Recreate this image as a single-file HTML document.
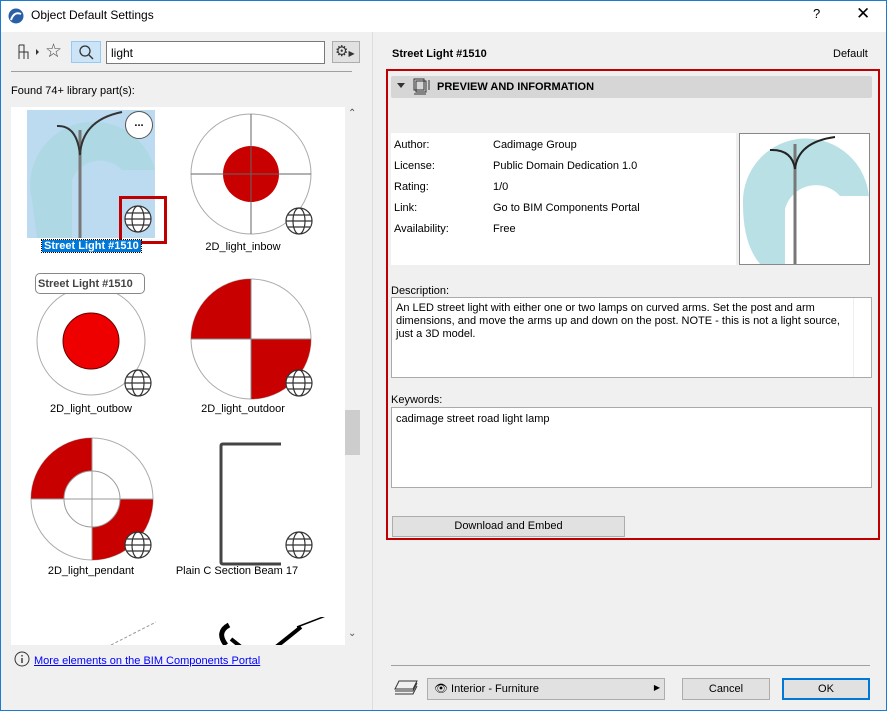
<!DOCTYPE html>
<html><head><style>
*{box-sizing:border-box;margin:0;padding:0}
body{width:887px;height:711px;overflow:hidden;background:#f0f0f0;font-family:"Liberation Sans",sans-serif;font-size:11px;color:#000;position:relative}
.a{position:absolute}
.win{position:absolute;left:0;top:0;width:887px;height:711px;border:1px solid #1a7bd0}
.t{white-space:nowrap}
.btn{position:absolute;background:#e1e1e1;border:1px solid #adadad;text-align:center;font-size:11px}
.lbl{position:absolute;width:150px;text-align:center;font-size:11px}
.globe{position:absolute;width:28px;height:28px}
</style></head><body>
<div class="win"></div>
<div class="a" style="left:1px;top:1px;width:885px;height:31px;background:#fff"></div>
<svg class="a" style="left:8px;top:8px" width="16" height="16"><circle cx="8" cy="8" r="7.5" fill="#2a5fa8"/><path d="M3 12 Q6 3 13 6" stroke="#fff" stroke-width="2" fill="none"/></svg>
<div class="a t" style="left:31px;top:8px;font-size:12px">Object Default Settings</div>
<div class="a t" style="left:813px;top:6px;font-size:13px">?</div>
<div class="a t" style="left:856px;top:4px;font-size:17px">✕</div>
<svg class="a" style="left:16px;top:43px" width="24" height="18"><path d="M3 2h5v7h4v7M3 2v14M3 9h5M8 9v7" stroke="#333" fill="none"/><path d="M20 6l3 3-3 3z" fill="#333"/></svg>
<div class="a" style="left:45px;top:40px;font-size:19px;color:#444">☆</div>
<div class="a" style="left:71px;top:41px;width:30px;height:22px;background:#cce4f7;border:1px solid #99c9ef"></div>
<svg class="a" style="left:78px;top:44px" width="16" height="16"><circle cx="7" cy="7" r="5" stroke="#333" stroke-width="1.3" fill="none"/><path d="M11 11l4 4" stroke="#333" stroke-width="1.3"/></svg>
<div class="a" style="left:106px;top:41px;width:219px;height:23px;background:#fff;border:1px solid #7a7a7a"></div>
<div class="a t" style="left:111px;top:46px;font-size:12px">light</div>
<div class="a" style="left:332px;top:41px;width:28px;height:22px;background:#e1e1e1;border:1px solid #adadad;font-size:15px;line-height:20px;padding-left:2px;color:#333">⚙<span style="font-size:8px">▶</span></div>
<div class="a" style="left:11px;top:71px;width:341px;height:1px;background:#a0a0a0"></div>
<div class="a t" style="left:11px;top:85px">Found 74+ library part(s):</div>
<div class="a" style="left:11px;top:107px;width:334px;height:538px;background:#fff;overflow:hidden">
 <div class="a" style="left:16px;top:3px;width:128px;height:128px;background:#bcdaf0"></div>
 <svg class="a" style="left:16px;top:3px" width="128" height="128"><path d="M5 90 A55 55 0 0 1 128 60 L128 60 L95 60 A30 30 0 0 0 45 70 L45 128 L10 128 Z" fill="#a8d8de" opacity=".7"/><path d="M53 20 L53 128" stroke="#777" stroke-width="3"/><path d="M53 45 Q55 10 95 2" stroke="#333" stroke-width="2" fill="none"/><path d="M53 45 Q50 15 30 16" stroke="#333" stroke-width="2" fill="none"/></svg>
 <div class="a" style="left:114px;top:4px;width:28px;height:28px;border-radius:50%;background:#fff;border:1px solid #555;text-align:center;font-weight:bold;line-height:22px">...</div>
 <div class="a" style="left:108px;top:89px;width:48px;height:48px;border:3px solid #c00000"></div>
 <div class="a t" style="left:31px;top:133px;background:#0078d7;color:#fff;font-weight:bold;padding:0 2px;outline:1px dotted #000">Street Light #1510</div>
 <svg class="a" style="left:178px;top:5px" width="124" height="124"><circle cx="62" cy="62" r="60" fill="#fff" stroke="#aaa"/><circle cx="62" cy="62" r="28" fill="#c80000"/><path d="M62 2v120M2 62h120" stroke="#666"/></svg>
 <div class="lbl" style="left:157px;top:134px">2D_light_inbow</div>
 <svg class="a" style="left:24px;top:178px" width="112" height="112"><circle cx="56" cy="56" r="54" fill="#fff" stroke="#aaa"/><circle cx="56" cy="56" r="28" fill="#e00" stroke="#600"/></svg>
 <div class="a t" style="left:24px;top:166px;width:110px;height:21px;border:1px solid #888;border-radius:5px;background:#fff;font-weight:bold;color:#444;padding:4px 2px">Street Light #1510</div>
 <div class="lbl" style="left:5px;top:296px">2D_light_outbow</div>
 <svg class="a" style="left:178px;top:170px" width="124" height="124"><circle cx="62" cy="62" r="60" fill="#fff" stroke="#aaa"/><path d="M62 62V2A60 60 0 0 0 2 62Z" fill="#c80000"/><path d="M62 62V122A60 60 0 0 0 122 62Z" fill="#c80000"/><path d="M62 2v120M2 62h120" stroke="#888"/></svg>
 <div class="lbl" style="left:157px;top:296px">2D_light_outdoor</div>
 <svg class="a" style="left:19px;top:330px" width="124" height="124"><circle cx="62" cy="62" r="61" fill="#fff" stroke="#aaa"/><path d="M62 62V1A61 61 0 0 0 1 62Z" fill="#c80000"/><path d="M62 62V123A61 61 0 0 0 123 62Z" fill="#c80000"/><circle cx="62" cy="62" r="28" fill="#fff" stroke="#999"/><path d="M62 1v122M1 62h122" stroke="#999"/></svg>
 <div class="lbl" style="left:5px;top:458px">2D_light_pendant</div>
 <svg class="a" style="left:208px;top:335px" width="64" height="124"><path d="M62 2H4Q2 2 2 4V120Q2 122 4 122H62" stroke="#444" stroke-width="3" fill="none"/></svg>
 <div class="lbl" style="left:151px;top:458px">Plain C Section Beam 17</div>
 <svg class="a" style="left:40px;top:510px" width="280" height="30"><path d="M60 28L105 5" stroke="#999" stroke-dasharray="3 2"/><path d="M175 28Q165 15 178 8" stroke="#000" stroke-width="5" fill="none"/><path d="M180 22L190 30M225 30L250 10" stroke="#000" stroke-width="4"/><path d="M246 10L285 -5" stroke="#000" stroke-width="1.5"/></svg>
 <svg class="globe" style="left:113px;top:98px" viewBox="0 0 28 28"><g fill="none" stroke="#333" stroke-width="1.2"><circle cx="14" cy="14" r="13" fill="#fff"/><ellipse cx="14" cy="14" rx="6" ry="13"/><path d="M1 14h26M3 8h22M3 20h22"/></g></svg>
 <svg class="globe" style="left:274px;top:100px" viewBox="0 0 28 28"><g fill="none" stroke="#333" stroke-width="1.2"><circle cx="14" cy="14" r="13" fill="#fff"/><ellipse cx="14" cy="14" rx="6" ry="13"/><path d="M1 14h26M3 8h22M3 20h22"/></g></svg>
 <svg class="globe" style="left:113px;top:262px" viewBox="0 0 28 28"><g fill="none" stroke="#333" stroke-width="1.2"><circle cx="14" cy="14" r="13" fill="#fff"/><ellipse cx="14" cy="14" rx="6" ry="13"/><path d="M1 14h26M3 8h22M3 20h22"/></g></svg>
 <svg class="globe" style="left:274px;top:262px" viewBox="0 0 28 28"><g fill="none" stroke="#333" stroke-width="1.2"><circle cx="14" cy="14" r="13" fill="#fff"/><ellipse cx="14" cy="14" rx="6" ry="13"/><path d="M1 14h26M3 8h22M3 20h22"/></g></svg>
 <svg class="globe" style="left:113px;top:424px" viewBox="0 0 28 28"><g fill="none" stroke="#333" stroke-width="1.2"><circle cx="14" cy="14" r="13" fill="#fff"/><ellipse cx="14" cy="14" rx="6" ry="13"/><path d="M1 14h26M3 8h22M3 20h22"/></g></svg>
 <svg class="globe" style="left:274px;top:424px" viewBox="0 0 28 28"><g fill="none" stroke="#333" stroke-width="1.2"><circle cx="14" cy="14" r="13" fill="#fff"/><ellipse cx="14" cy="14" rx="6" ry="13"/><path d="M1 14h26M3 8h22M3 20h22"/></g></svg>
</div>
<div class="a" style="left:345px;top:410px;width:15px;height:45px;background:#cdcdcd"></div>
<div class="a" style="left:348px;top:108px;font-size:10px;color:#555">⌃</div>
<div class="a" style="left:348px;top:628px;font-size:10px;color:#555">⌄</div>
<svg class="a" style="left:14px;top:651px" width="16" height="16"><circle cx="8" cy="8" r="7" fill="none" stroke="#333"/><path d="M8 7v5M8 4v1.5" stroke="#333" stroke-width="1.4"/></svg>
<div class="a t" style="left:34px;top:655px;color:#00f;text-decoration:underline">More elements on the BIM Components Portal</div>
<div class="a" style="left:372px;top:32px;width:1px;height:678px;background:#ddd"></div>
<div class="a t" style="left:392px;top:48px;font-weight:bold">Street Light #1510</div>
<div class="a t" style="left:833px;top:48px">Default</div>
<div class="a" style="left:386px;top:69px;width:494px;height:471px;border:2px solid #c00000"></div>
<div class="a" style="left:391px;top:76px;width:481px;height:22px;background:#d6d6d6;border-radius:2px"></div>
<div class="a" style="left:397px;top:83px;width:0;height:0;border-left:4px solid transparent;border-right:4px solid transparent;border-top:5px solid #333"></div>
<svg class="a" style="left:412px;top:78px" width="20" height="18"><rect x="2" y="1" width="10" height="11" fill="none" stroke="#333"/><rect x="4" y="3" width="10" height="11" fill="none" stroke="#333"/><path d="M2 16h12M17 2v10" stroke="#333"/></svg>
<div class="a t" style="left:437px;top:81px;font-weight:bold">PREVIEW AND INFORMATION</div>
<div class="a" style="left:391px;top:133px;width:345px;height:132px;background:#fff"></div>
<div class="a t" style="left:394px;top:135px;line-height:21px">Author:<br>License:<br>Rating:<br>Link:<br>Availability:</div>
<div class="a t" style="left:493px;top:135px;line-height:21px">Cadimage Group<br>Public Domain Dedication 1.0<br>1/0<br>Go to BIM Components Portal<br>Free</div>
<div class="a" style="left:739px;top:133px;width:131px;height:132px;background:#fff;border:1px solid #888"></div>
<svg class="a" style="left:740px;top:134px" width="129" height="130"><path d="M3 70 A60 60 0 0 1 129 65 L129 62 L100 62 A32 32 0 0 0 45 75 L45 130 L20 130 Q3 110 3 70Z" fill="#a8d8de" opacity=".8"/><path d="M55 10V130" stroke="#777" stroke-width="3"/><path d="M55 35Q58 8 95 3" stroke="#222" stroke-width="2" fill="none"/><path d="M55 35Q52 15 30 16" stroke="#222" stroke-width="2" fill="none"/></svg>
<div class="a t" style="left:391px;top:285px">Description:</div>
<div class="a" style="left:391px;top:297px;width:481px;height:81px;background:#fff;border:1px solid #aaa;padding:4px 20px 0 4px;line-height:13px">An LED street light with either one or two lamps on curved arms. Set the post and arm dimensions, and move the arms up and down on the post. NOTE - this is not a light source, just a 3D model.</div>
<div class="a" style="left:853px;top:298px;width:17px;height:79px;border-left:1px solid #eee"></div>
<div class="a t" style="left:391px;top:394px">Keywords:</div>
<div class="a" style="left:391px;top:407px;width:481px;height:81px;background:#fff;border:1px solid #aaa;padding:5px 4px">cadimage street road light lamp</div>
<div class="btn" style="left:392px;top:516px;width:233px;height:21px;line-height:19px">Download and Embed</div>
<div class="a" style="left:391px;top:665px;width:479px;height:1px;background:#a0a0a0"></div>
<svg class="a" style="left:393px;top:679px" width="26" height="18"><path d="M6 2h18l-4 8H2z" fill="none" stroke="#333"/><path d="M2 12h18l4-8M2 15h18l4-8" fill="none" stroke="#333"/></svg>
<div class="btn" style="left:427px;top:678px;width:238px;height:22px;text-align:left;padding:3px 0 0 6px">👁︎ Interior - Furniture<span style="position:absolute;right:4px;top:4px;font-size:8px">▶</span></div>
<div class="btn" style="left:682px;top:678px;width:88px;height:22px;line-height:20px">Cancel</div>
<div class="btn" style="left:782px;top:678px;width:88px;height:22px;line-height:18px;border:2px solid #0078d7">OK</div>
</body></html>
